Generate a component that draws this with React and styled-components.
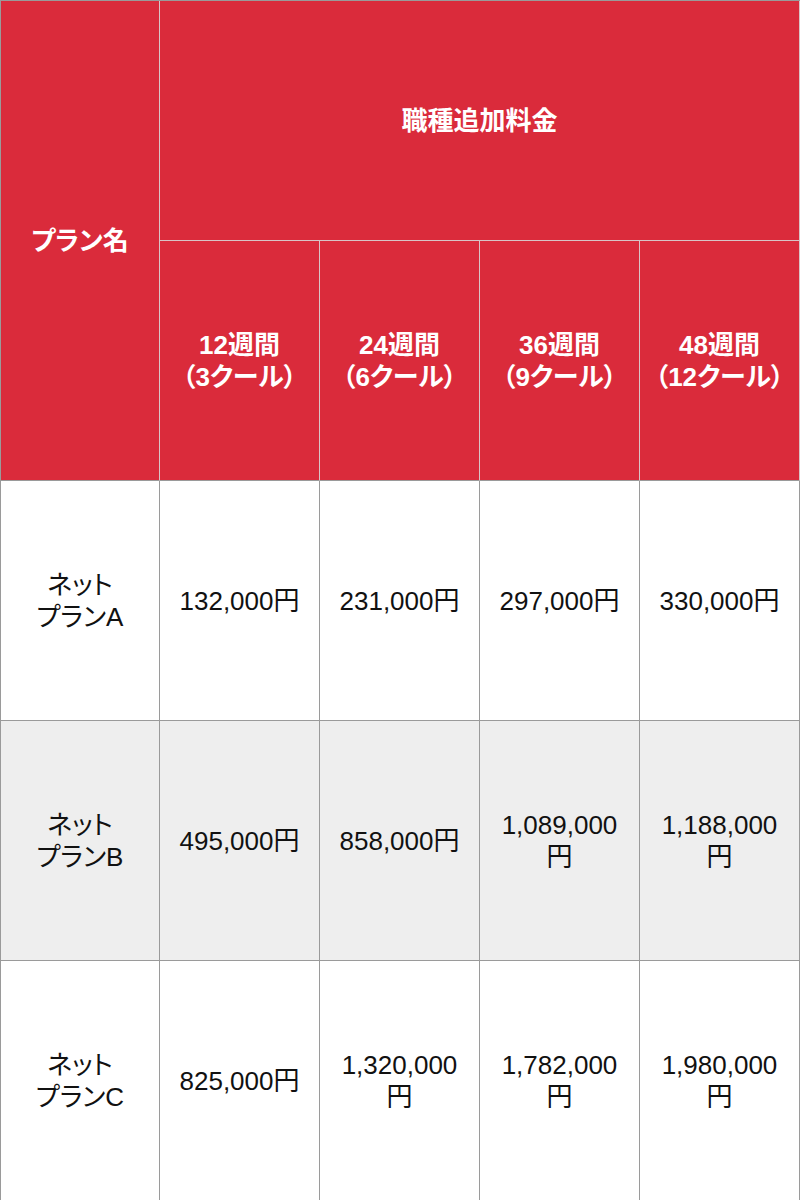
import React from "react";
import styled, { createGlobalStyle } from "styled-components";

const Global = createGlobalStyle`
  html, body { margin: 0; padding: 0; background: #ffffff; }
  body { font-family: "Liberation Sans", Arial, "Noto Sans CJK JP", sans-serif; }
`;

const RED = "#da2b3b";
const LINE = "#9a9a9a";
const HEAD_LINE = "#d8c4c6";

const Table = styled.div`
  display: grid;
  grid-template-columns: 159px repeat(4, 160px);
  grid-auto-rows: 240px;
  width: 800px;
  border-top: 1px solid ${LINE};
  border-left: 1px solid ${LINE};
  box-sizing: border-box;
  font-family: "Liberation Sans", Arial, "Noto Sans CJK JP", sans-serif;
  font-feature-settings: "palt";
`;

const Cell = styled.div`
  display: flex;
  align-items: center;
  justify-content: center;
  text-align: center;
  box-sizing: border-box;
  font-size: 26px;
  line-height: 32px;
`;

const HeadCell = styled(Cell)`
  background: ${RED};
  color: #ffffff;
  font-weight: bold;
  padding: 0 2px;
  border-right: 1px solid ${HEAD_LINE};
  border-bottom: 1px solid ${(p) => (p.$edge ? LINE : HEAD_LINE)};
  grid-column: ${(p) => p.$col || "auto"};
  grid-row: ${(p) => p.$row || "auto"};
`;

const BodyCell = styled(Cell)`
  background: ${(p) => (p.$shade ? "#eeeeee" : "#ffffff")};
  color: #111111;
  padding: 0 15px;
  border-right: 1px solid ${LINE};
  border-bottom: 1px solid ${LINE};
`;

const Text = styled.span`
  display: block;
`;

const periods = [
  ["12週間", "（3クール）"],
  ["24週間", "（6クール）"],
  ["36週間", "（9クール）"],
  ["48週間", "（12クール）"],
];

const plans = [
  { name: "プランA", prices: ["132,000円", "231,000円", "297,000円", "330,000円"] },
  { name: "プランB", prices: ["495,000円", "858,000円", "1,089,000円", "1,188,000円"] },
  { name: "プランC", prices: ["825,000円", "1,320,000円", "1,782,000円", "1,980,000円"] },
];

export default function App() {
  return (
    <>
      <Global />
      <Table>
        <HeadCell $row="1 / span 2" $col="1" $edge>
          プラン名
        </HeadCell>
        <HeadCell $row="1" $col="2 / span 4">
          職種追加料金
        </HeadCell>
        {periods.map(([a, b]) => (
          <HeadCell key={a} $row="2" $edge>
            <Text>
              {a}
              <br />
              {b}
            </Text>
          </HeadCell>
        ))}
        {plans.map((plan, i) => (
          <React.Fragment key={plan.name}>
            <BodyCell $shade={i % 2 === 1}>
              <Text>
                ネット
                <br />
                {plan.name}
              </Text>
            </BodyCell>
            {plan.prices.map((p) => (
              <BodyCell key={p} $shade={i % 2 === 1}>
                <Text>{p}</Text>
              </BodyCell>
            ))}
          </React.Fragment>
        ))}
      </Table>
    </>
  );
}
